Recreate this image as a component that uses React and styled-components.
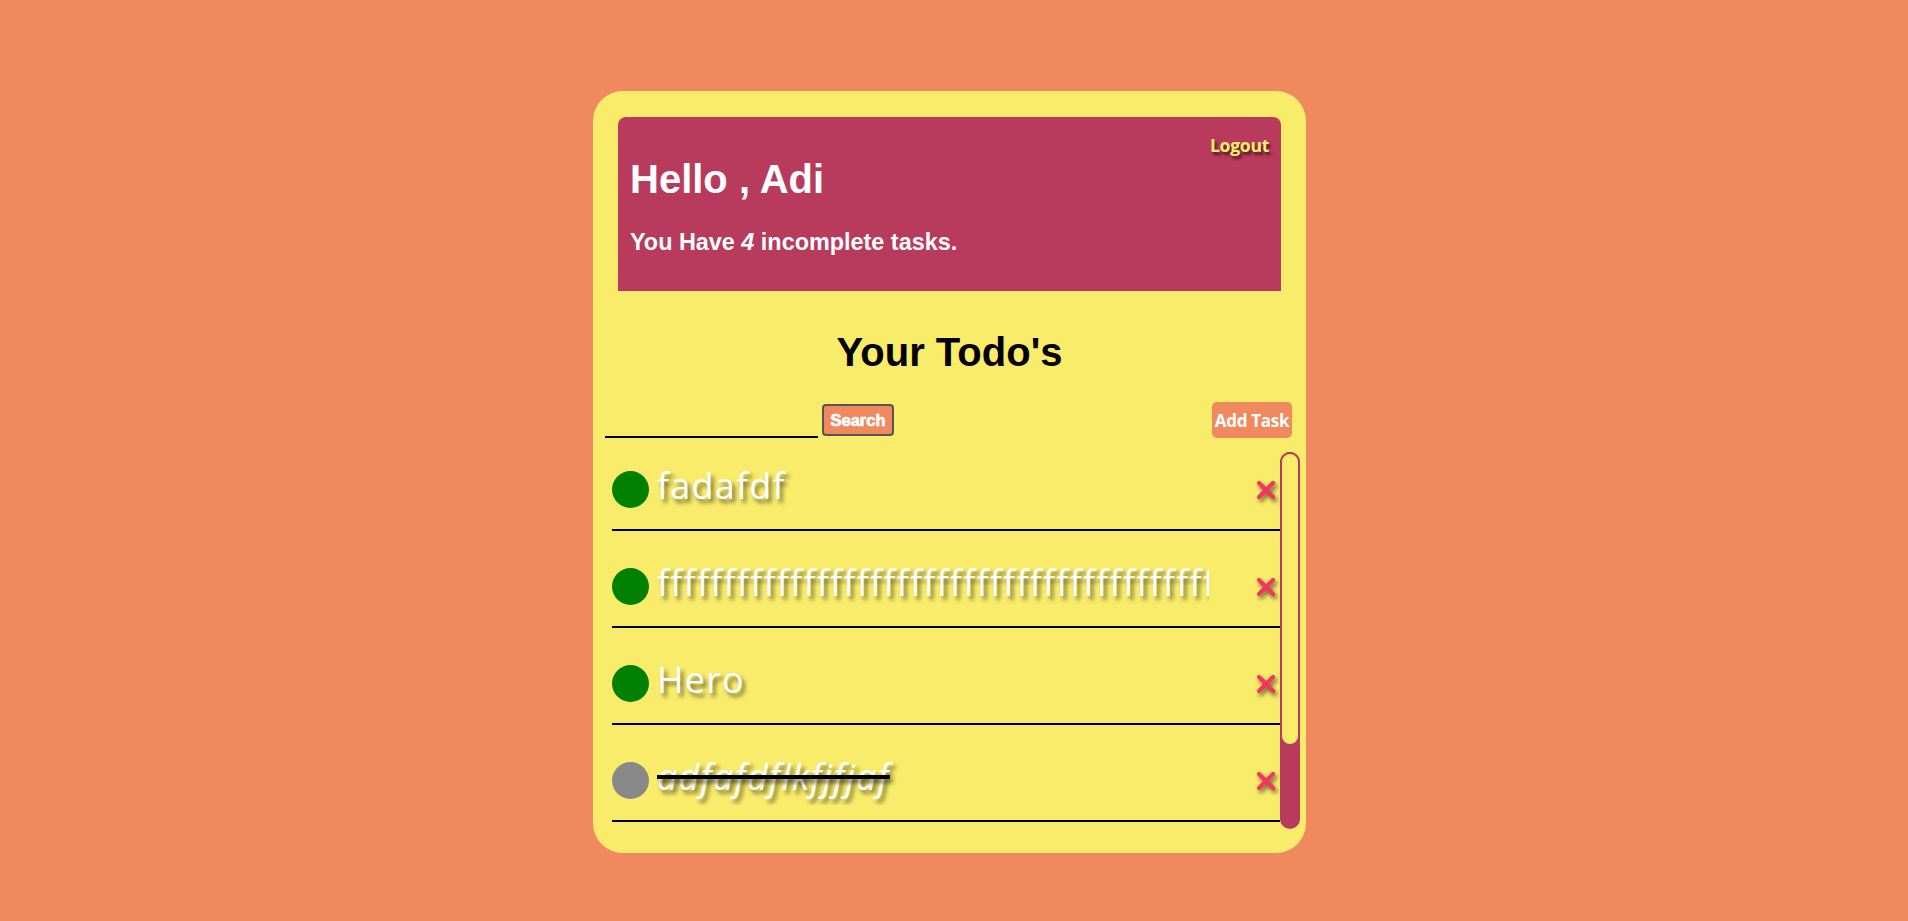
import React, { useState } from 'react';
import styled, { createGlobalStyle } from 'styled-components';

const SALMON = '#f0895e';
const YELLOW = '#f9ec6b';
const BERRY = '#b83a5c';
const LIST_HEIGHT = 377;
const ROW_HEIGHT = 79;
const ROW_GAP = 18;

const GlobalStyle = createGlobalStyle`
  body {
    margin: 0;
    background: ${SALMON};
    font-family: "Liberation Sans", Arial, sans-serif;
  }
`

const Page = styled.div`
  display: flex;
  justify-content: center;
  align-items: flex-start;
  padding: 91px 9px 0 0;
  min-height: 100vh;
  box-sizing: border-box;
`

const Card = styled.main`
  width: 713px;
  box-sizing: border-box;
  background: ${YELLOW};
  border-radius: 30px;
  padding: 26px 12px 24px;
  display: flex;
  flex-direction: column;
`

const Header = styled.header`
  margin: 0 13px;
  background: ${BERRY};
  border-radius: 8px 8px 0 0;
  padding: 15px 12px 14px;
  display: flex;
  justify-content: space-between;
  align-items: flex-start;
  color: #fff;
`

const Greeting = styled.h1`
  margin: 25.4px 0 26.2px;
  font: bold 40px "Liberation Sans", Arial, sans-serif;
`

const Summary = styled.h3`
  margin: 0 0 21.5px;
  font: bold 23.4px "Liberation Sans", Arial, sans-serif;
`

const Logout = styled.button`
  background: none;
  border: none;
  padding: 0;
  margin-top: 1px;
  color: #fcee6c;
  font: 700 17.6px "Open Sans", sans-serif;
  line-height: normal;
  letter-spacing: -0.3px;
  text-shadow: 2px 3px 3px rgba(0, 0, 0, 0.6);
  cursor: pointer;
`

const Title = styled.h1`
  margin: 39.4px 0 26.6px;
  text-align: center;
  color: #000;
  font: bold 40px "Liberation Sans", Arial, sans-serif;
`

const Controls = styled.div`
  display: flex;
  justify-content: space-between;
  align-items: flex-end;
  padding-right: 2px;
`

const SearchGroup = styled.form`
  display: flex;
  align-items: flex-end;
  gap: 4px;
  margin: 0;
`

const SearchInput = styled.input`
  width: 213px;
  height: 30px;
  box-sizing: border-box;
  border: none;
  border-bottom: 2px solid #000;
  background: transparent;
  outline: none;
  font: 16px "Liberation Sans", Arial, sans-serif;
`

const SearchButton = styled.button`
  width: 72px;
  height: 32px;
  margin-bottom: 2px;
  padding: 0;
  background: ${SALMON};
  border: 2px solid #555;
  border-radius: 4px;
  color: #fff;
  font: bold 16.5px "Liberation Sans", Arial, sans-serif;
  -webkit-text-stroke: 0.7px #fff;
  cursor: pointer;
`

const AddButton = styled.button`
  width: 80px;
  height: 36px;
  padding: 0;
  background: ${SALMON};
  border: none;
  border-radius: 5px;
  color: #fff;
  font: 700 17px "Open Sans", sans-serif;
  letter-spacing: -0.3px;
  cursor: pointer;
`

const ListArea = styled.div`
  display: flex;
  height: ${LIST_HEIGHT}px;
  margin: 14px -6px 0 7px;
`

const List = styled.ul`
  flex: 1;
  min-width: 0;
  margin: 0;
  padding: 0;
  list-style: none;
  overflow-y: auto;
  scrollbar-width: none;
  display: flex;
  flex-direction: column;
  gap: ${ROW_GAP}px;
`

const ScrollTrack = styled.div`
  flex-shrink: 0;
  width: 20px;
  background: ${BERRY};
  border-radius: 10px;
`

const ScrollThumb = styled.div`
  box-sizing: border-box;
  background: ${YELLOW};
  border: 2px solid ${BERRY};
  border-radius: 10px;
`

const Row = styled.li`
  flex-shrink: 0;
  display: flex;
  align-items: center;
  padding: 13px 0 15px;
  border-bottom: 2px solid #000;
`

const Dot = styled.span`
  flex-shrink: 0;
  width: 37px;
  height: 37px;
  border-radius: 50%;
  background: ${p => (p.$done ? '#888888' : '#008000')};
`

const TodoText = styled.span`
  flex: 1;
  min-width: 0;
  margin: 0 47px 0 8px;
  padding-bottom: 7px;
  overflow: hidden;
  white-space: nowrap;
  color: #fff;
  font: ${p => (p.$done ? 'italic' : 'normal')} 36px "Open Sans", sans-serif;
  line-height: 42px;
  letter-spacing: 1.2px;
  text-shadow: 3px 4px 4px rgba(0, 0, 0, 0.55);
  text-decoration: ${p => (p.$done ? 'line-through 4px #000' : 'none')};
`

const Delete = styled.button`
  flex-shrink: 0;
  margin-right: 4px;
  padding: 0;
  width: 20px;
  height: 20px;
  background: none;
  border: none;
  cursor: pointer;
  filter: drop-shadow(2px 3px 2px rgba(0, 0, 0, 0.55));
  svg { display: block; }
`

const Cross = () => (
  <svg width="20" height="20" viewBox="0 0 20 20">
    <path d="M3 3 L17 17 M17 3 L3 17" stroke="#f5345f" strokeWidth="4.2" strokeLinecap="round" fill="none" />
  </svg>
)

const initialTodos = [
  { id: 1, text: 'fadafdf', done: false },
  { id: 2, text: 'f'.repeat(60), done: false },
  { id: 3, text: 'Hero', done: false },
  { id: 4, text: 'adfafdflkfjfjaf', done: true },
  { id: 5, text: 'qwerty', done: false },
]

const App = () => {
  const [todos, setTodos] = useState(initialTodos)
  const [query, setQuery] = useState('')
  const left = todos.filter(t => !t.done).length
  const remove = id => setTodos(todos.filter(t => t.id !== id))
  const toggle = id => setTodos(todos.map(t => (t.id === id ? { ...t, done: !t.done } : t)))
  const content = todos.length * ROW_HEIGHT + (todos.length - 1) * ROW_GAP + 16
  const thumb = Math.min(LIST_HEIGHT, Math.round((LIST_HEIGHT * LIST_HEIGHT) / content))

  return (
    <>
      <GlobalStyle />
      <Page>
        <Card>
          <Header>
            <div>
              <Greeting>Hello , Adi</Greeting>
              <Summary>You Have <i>{left}</i> incomplete tasks.</Summary>
            </div>
            <Logout>Logout</Logout>
          </Header>
          <Title>Your Todo's</Title>
          <Controls>
            <SearchGroup onSubmit={e => e.preventDefault()}>
              <SearchInput value={query} onChange={e => setQuery(e.target.value)} />
              <SearchButton type="submit">Search</SearchButton>
            </SearchGroup>
            <AddButton>Add Task</AddButton>
          </Controls>
          <ListArea>
            <List>
              {todos.map(t => (
                <Row key={t.id}>
                  <Dot $done={t.done} onClick={() => toggle(t.id)} />
                  <TodoText $done={t.done}>{t.text}</TodoText>
                  <Delete onClick={() => remove(t.id)}><Cross /></Delete>
                </Row>
              ))}
            </List>
            <ScrollTrack>
              <ScrollThumb style={{ height: thumb }} />
            </ScrollTrack>
          </ListArea>
        </Card>
      </Page>
    </>
  )
}

export default App
